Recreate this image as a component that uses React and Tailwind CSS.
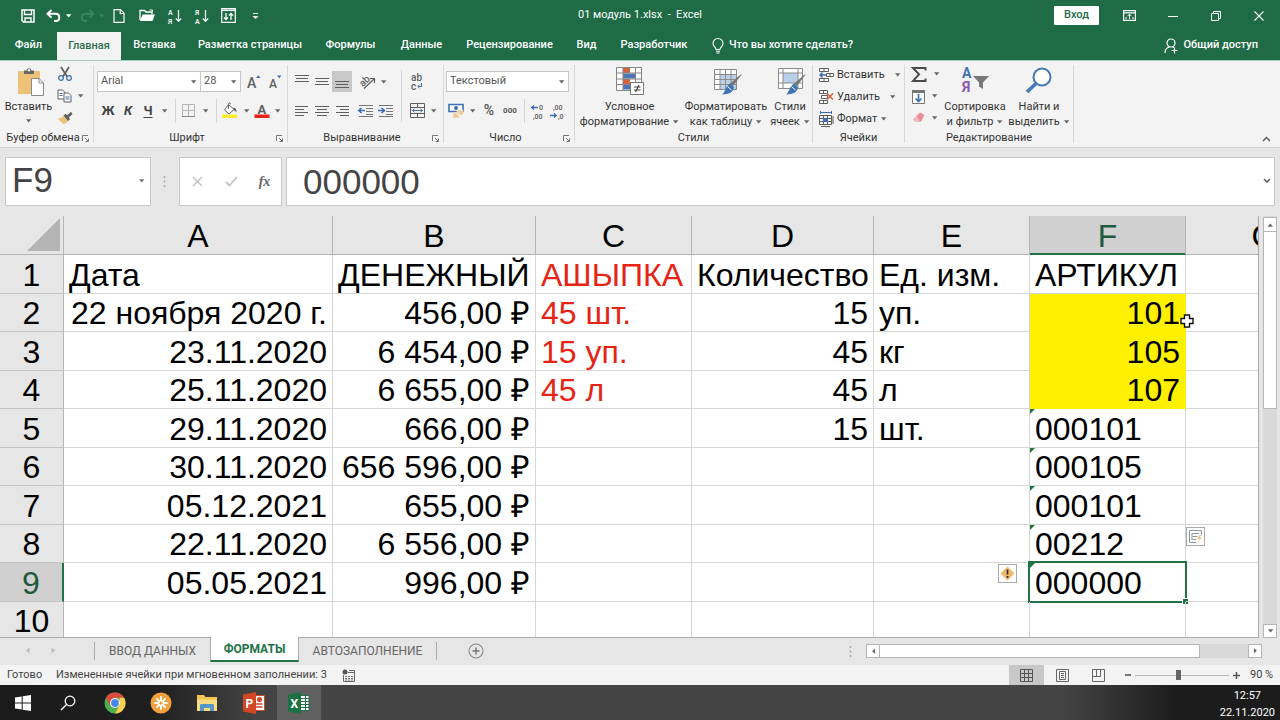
import React, { useState } from "react";

const INK = "#5f5f5f";
const BLUE = "#3f6fae";

const Arrow = ({ className = "" }) => (
  <svg width="7" height="4" viewBox="0 0 7 4" className={`shrink-0 ${className}`}>
    <path d="M1 0.3h5.400L3.700 3.400z" fill="currentColor" />
  </svg>
);

const Svg = ({ w = 16, h = 16, children, className = "" }) => (
  <svg
    width={w}
    height={h}
    viewBox={`0 0 ${w} ${h}`}
    fill="none"
    className={`shrink-0 overflow-visible ${className}`}
    fontFamily="Roboto, sans-serif"
  >
    {children}
  </svg>
);

const IconButton = ({ label, width = "w-5", className = "", children }) => (
  <button
    type="button"
    aria-label={label}
    className={`flex h-full shrink-0 items-center justify-center ${width} ${className}`}
  >
    {children}
  </button>
);

const Separator = () => <span className="h-6 w-px shrink-0 bg-[#d5d5d5]" />;

/* ---------- Title bar ---------- */

const SortIcon = ({ top, bottom }) => (
  <Svg>
    <text x="1" y="7" fontSize="7" fontWeight="700" fill="#e6f2ec">{top}</text>
    <text x="1" y="15.500" fontSize="7" fontWeight="700" fill="#e6f2ec">{bottom}</text>
    <path d="M11.500 2v11M8.800 10.500l2.700 2.800 2.700-2.800" stroke="#e6f2ec" strokeWidth="1.300" />
  </Svg>
);

const TitleBar = () => (
  <header className="grid h-[31px] grid-cols-[1fr_auto_1fr] items-center text-[11px] text-white">
    <div className="flex h-full items-center pl-[14px]">
      <IconButton label="Сохранить" width="w-[27px]">
        <Svg w={14} h={14}>
          <path d="M1 1h12v12H2.500L1 11.500z" stroke="#fff" strokeWidth="1.500" />
          <path d="M3.500 1v4.500h7V1M4 13V9h6v4" stroke="#fff" strokeWidth="1.400" />
        </Svg>
      </IconButton>
      <IconButton label="Отменить" width="w-[24px]">
        <Svg w={15} h={14}>
          <path d="M5.500 1L1.500 4.800l4 3.800M2 4.800h7.500c5 0 5 7.200 0 7.200H8" stroke="#fff" strokeWidth="2" />
        </Svg>
      </IconButton>
      <Arrow className="mr-[4px]" />
      <IconButton label="Вернуть" width="w-[22px]">
        <Svg w={15} h={14}>
          <path d="M9.500 1l4 3.800-4 3.800M13 4.800H5.500c-5 0-5 7.200 0 7.200H7" stroke="#3b8260" strokeWidth="2" />
        </Svg>
      </IconButton>
      <Arrow className="text-[#3b8260]" />
      <IconButton label="Создать" width="w-[28px]">
        <Svg w={12} h={14}>
          <path d="M1 .7h6.500L11 4.200v9.100H1zM7.200.7v3.800H11" stroke="#fff" strokeWidth="1.200" />
        </Svg>
      </IconButton>
      <IconButton label="Открыть" width="w-[28px]">
        <Svg w={17} h={13}>
          <path d="M1 11V1.500h4.500L7 3h6v2.500" stroke="#fff" strokeWidth="1.300" />
          <path d="M10.500 1h3v1.500" stroke="#fff" />
          <path d="M3.500 5.500H16L13.500 12H1z" fill="#fff" />
        </Svg>
      </IconButton>
      <IconButton label="Сортировка от А до Я" width="w-[27px]">
        <SortIcon top="А" bottom="Я" />
      </IconButton>
      <IconButton label="Сортировка от Я до А" width="w-[27px]">
        <SortIcon top="Я" bottom="А" />
      </IconButton>
      <IconButton label="Настраиваемая сортировка" width="w-[27px]">
        <Svg w={15} h={15}>
          <path d="M.7.7h13.600v13.600H.7z" stroke="#fff" strokeWidth="1.200" />
          <path d="M.7 2.300h13.600" stroke="#fff" strokeWidth="1.500" />
          <path d="M5 5v6.500M3 9.500l2 2 2-2M10 12V5.500M8 7.500l2-2 2 2" stroke="#fff" strokeWidth="1.300" />
        </Svg>
      </IconButton>
      <IconButton label="Настройка панели быстрого доступа" width="w-[27px]">
        <Svg w={7} h={8}>
          <path d="M1 1.500h5" stroke="#fff" />
          <path d="M.5 4h6l-3 3z" fill="#fff" />
        </Svg>
      </IconButton>
    </div>
    <h1 className="whitespace-pre">01 модуль 1.xlsx  -  Excel</h1>
    <div className="flex h-full items-center justify-end">
      <button
        type="button"
        className="mr-[8px] h-[19px] w-[45px] rounded-[1px] bg-white font-medium text-[#1e6b46]"
      >
        Вход
      </button>
      <IconButton label="Параметры отображения ленты" width="w-[44px]">
        <Svg w={13} h={11}>
          <path d="M.6.6h11.800v9.800H.6zM.6 2.800h11.800" stroke="#fff" strokeWidth="1.200" />
          <path d="M6.500 9V4.500M4.500 6.200l2-2 2 2M2 8h2M9 8h2" stroke="#fff" />
        </Svg>
      </IconButton>
      <IconButton label="Свернуть" width="w-[43px]">
        <Svg w={10} h={10}><path d="M0 5.500h10" stroke="#fff" /></Svg>
      </IconButton>
      <IconButton label="Свернуть в окно" width="w-[43px]">
        <Svg w={10} h={10}><path d="M.5 2.500h7v7h-7zM2.500 2.500v-2h7v7h-2" stroke="#fff" /></Svg>
      </IconButton>
      <IconButton label="Закрыть" width="w-[43px]">
        <Svg w={10} h={10}><path d="M.5.5l9 9M9.500.5l-9 9" stroke="#fff" strokeWidth="1.100" /></Svg>
      </IconButton>
    </div>
  </header>
);

/* ---------- Ribbon tabs ---------- */

const ribbonTabs = [
  { name: "Файл", width: "w-[57px]" },
  { name: "Главная", width: "w-[64px]", active: true },
  { name: "Вставка", width: "w-[67px]" },
  { name: "Разметка страницы", width: "w-[124px]" },
  { name: "Формулы", width: "w-[77px]" },
  { name: "Данные", width: "w-[65px]" },
  { name: "Рецензирование", width: "w-[111px]" },
  { name: "Вид", width: "w-[43px]" },
  { name: "Разработчик", width: "w-[92px]" },
];

const RibbonTabs = () => (
  <nav className="flex h-[29px] items-stretch text-[11px] font-medium text-white">
    {ribbonTabs.map((tab) => (
      <button
        key={tab.name}
        type="button"
        className={`shrink-0 whitespace-nowrap ${tab.width} ${
          tab.active ? "mt-px bg-[#f3f3f3] text-[#2c6b4b]" : ""
        }`}
      >
        {tab.name}
      </button>
    ))}
    <button type="button" className="ml-3 flex items-center gap-[5px] whitespace-nowrap">
      <Svg w={12} h={16}>
        <path
          d="M4 11.500C4 9 1 8.500 1 5.500a5 5 0 0 1 10 0C11 8.500 8 9 8 11.500zM4 13.200h4M4.500 15h3"
          stroke="#fff"
          strokeWidth="1.100"
        />
      </Svg>
      Что вы хотите сделать?
    </button>
    <button type="button" className="mr-[22px] ml-auto flex items-center gap-1 whitespace-nowrap">
      <Svg w={15} h={16}>
        <circle cx="7" cy="5" r="4" stroke="#fff" strokeWidth="1.200" />
        <path d="M1 15c0-3.500 2-5.500 4.500-6M8.500 8.800l1.500.8M10.500 9.500v6M7.500 12.500h6" stroke="#fff" strokeWidth="1.200" />
      </Svg>
      Общий доступ
    </button>
  </nav>
);

/* ---------- Ribbon ---------- */

const Launcher = ({ label }) => (
  <button type="button" aria-label={label} className="ml-auto">
    <Svg w={7} h={7}>
      <path d="M.5 6V.5H6M3 3l3 3M6.500 3.500v3h-3" stroke="#777" />
    </Svg>
  </button>
);

const Group = ({ title, width, launcher, children }) => (
  <section className={`flex shrink-0 flex-col ${width}`}>
    <div className="flex h-[70px] min-w-0 flex-1">{children}</div>
    <div className="flex h-[18px] items-center pr-1 pl-1">
      <h2 className="flex-1 text-center whitespace-nowrap">{title}</h2>
      {launcher && <Launcher label={title} />}
    </div>
  </section>
);

const GroupLine = () => <div className="my-[4px] w-px shrink-0 bg-[#d8d8d8]" />;

const BigButton = ({ icon, lines, width, arrowBelow }) => (
  <button type="button" className={`flex shrink-0 flex-col items-center pt-[6px] leading-[15px] ${width}`}>
    <span className="flex h-[32px] items-start justify-center">{icon}</span>
    {lines.map((line, idx) => (
      <span key={line} className="flex items-center gap-[3px] whitespace-nowrap">
        {line}
        {!arrowBelow && idx === lines.length - 1 && <Arrow className="text-[#666]" />}
      </span>
    ))}
    {arrowBelow && <Arrow className="mt-[5px] text-[#666]" />}
  </button>
);

const Select = ({ label, value, width }) => (
  <div className={`relative h-[21px] shrink-0 ${width}`}>
    <select
      aria-label={label}
      className="h-full w-full appearance-none border border-[#c6c6c6] bg-white pl-[3px] text-[11px] text-[#555]"
    >
      <option>{value}</option>
    </select>
    <Arrow className="pointer-events-none absolute top-[9px] right-[4px] text-[#666]" />
  </div>
);

const Lines = ({ rows, y = 2 }) => (
  <Svg w={14} h={14}>
    {rows.map(([x, w], idx) => (
      <path key={idx} d={`M${x} ${y + idx * 3 + 0.5}h${w}`} stroke={INK} />
    ))}
  </Svg>
);

const Clipboard = () => (
  <Group title="Буфер обмена" width="w-[93px]" launcher>
    <BigButton
      width="w-[57px]"
      lines={["Вставить"]}
      arrowBelow
      icon={
        <Svg w={28} h={30} className="ml-1">
          <path d="M1 4h22v23H1z" fill="#ebc277" />
          <path d="M7 7V3.500h2.500C10 .5 14 .5 14.500 3.500H17V7z" fill="#666" />
          <circle cx="12" cy="3.300" r="1.200" fill="#f3f3f3" />
          <path d="M14.500 11.500h7.500l4.500 4.500v12.500h-12z" fill="#fff" stroke="#8a8a8a" />
          <path d="M22 11.500v4.500h4.500" stroke="#8a8a8a" />
        </Svg>
      }
    />
    <div className="flex flex-col pt-[2px]">
      <button type="button" aria-label="Вырезать" className="flex h-[22px] items-center">
        <Svg w={16} h={16}>
          <path d="M4 1l6 9.500M12 1L6 10.500" stroke={INK} strokeWidth="1.700" />
          <circle cx="4" cy="12" r="2.300" stroke={BLUE} strokeWidth="1.300" />
          <circle cx="12" cy="12" r="2.300" stroke={BLUE} strokeWidth="1.300" />
        </Svg>
      </button>
      <button type="button" aria-label="Копировать" className="flex h-[22px] items-center gap-[4px]">
        <Svg w={16} h={14}>
          <path d="M1 1h4.500L8 3.500V10H1z" fill="#fff" stroke={INK} />
          <path d="M2.500 4.500h3M2.500 6.500h3" stroke={BLUE} />
          <path d="M7 4h4.500L14 6.500V13H7z" fill="#fff" stroke={INK} />
          <path d="M8.500 8h4M8.500 10h4" stroke={BLUE} />
        </Svg>
        <Arrow className="text-[#666]" />
      </button>
      <button type="button" aria-label="Формат по образцу" className="flex h-[22px] items-center">
        <Svg w={17} h={14}>
          <path d="M1 8l6-3 4 5-4 3.500z" fill="#ebc277" />
          <path d="M6.500 4.500l4.500 5.500 2-1.500-1.200-2L15.500 3 14 .8l-3.800 3.400-1.500-1.500z" fill={INK} />
        </Svg>
      </button>
    </div>
  </Group>
);

const FontGroup = () => (
  <Group title="Шрифт" width="w-[193px]" launcher>
    <div className="flex flex-col pt-[6px] pl-[3px]">
      <div className="flex h-[29px] items-center">
        <Select label="Шрифт" value="Arial" width="w-[104px]" />
        <Select label="Размер шрифта" value="28" width="w-[41px] -ml-px" />
        <IconButton label="Увеличить размер шрифта" width="w-[21px]" className="ml-[2px]">
          <Svg w={14} h={16}>
            <text x="0" y="13.500" fontSize="14" fontWeight="500" fill={INK}>А</text>
            <path d="M9 4l2.300-2.800L13.500 4z" fill={BLUE} />
          </Svg>
        </IconButton>
        <IconButton label="Уменьшить размер шрифта" width="w-[21px]">
          <Svg w={14} h={16}>
            <text x="1" y="13.500" fontSize="12" fontWeight="500" fill={INK}>А</text>
            <path d="M9 1.500h4.500L11.300 4.300z" fill={BLUE} />
          </Svg>
        </IconButton>
      </div>
      <div className="flex h-[29px] items-center text-[13px] text-[#444]">
        <IconButton label="Полужирный" className="ml-[1px] font-bold">Ж</IconButton>
        <IconButton label="Курсив" className="font-bold italic">К</IconButton>
        <IconButton label="Подчеркнутый" className="font-bold underline underline-offset-2">Ч</IconButton>
        <Arrow className="mr-[7px] ml-[3px] text-[#666]" />
        <Separator />
        <IconButton label="Границы" width="w-[24px]">
          <Svg w={13} h={13}>
            <path d="M.5.5h12v12H.5zM6.500.5v12M.5 6.500h12" stroke="#b5b5b5" />
            <path d="M0 12.500h13" stroke="#888" />
          </Svg>
        </IconButton>
        <Arrow className="mr-[7px] ml-[2px] text-[#666]" />
        <Separator />
        <IconButton label="Цвет заливки" width="w-[26px]">
          <Svg w={16} h={17}>
            <path d="M6.500 2.500l5.500 5-5 4.500L2.500 8z" fill="#fff" stroke={INK} />
            <path d="M6.500 7V2.200c0-1.800 2-1.800 2 0" stroke={INK} />
            <path d="M11.500 5.500c2.500.5 3 2 3 5-1-1.500-1.500-2-2.800-2.500z" fill={INK} />
            <path d="M0 12.500h15v3.500H0z" fill="#fdea2e" />
          </Svg>
        </IconButton>
        <Arrow className="text-[#666]" />
        <IconButton label="Цвет текста" width="w-[24px]">
          <Svg w={16} h={17}>
            <text x="3.500" y="11.500" fontSize="13" fontWeight="700" fill={INK}>А</text>
            <path d="M.5 12.500h15v3.500H.5z" fill="#e5241a" />
          </Svg>
        </IconButton>
        <Arrow className="text-[#666]" />
      </div>
    </div>
  </Group>
);

const IndentIcon = ({ right }) => (
  <Svg w={16} h={14}>
    <path d="M1 1.500h14M8 4.500h7M8 7.500h7M8 10.500h7M1 12.500h14" stroke="#777" />
    <path
      d={right ? "M0 6.500h6M3.500 4l3 2.500-3 2.500" : "M7 6.500H1M3.500 4L.8 6.500 3.500 9"}
      stroke={BLUE}
      strokeWidth="1.600"
    />
  </Svg>
);

const Alignment = () => (
  <Group title="Выравнивание" width="w-[155px]" launcher>
    <div className="flex flex-col pt-[6px] pl-[4px]">
      <div className="flex h-[29px] items-center">
        <IconButton label="По верхнему краю"><Lines y={0} rows={[[0, 14], [1, 12], [0, 14]]} /></IconButton>
        <IconButton label="По середине"><Lines y={3} rows={[[0, 14], [1, 12], [0, 14]]} /></IconButton>
        <span className="h-[21px]">
          <IconButton label="По нижнему краю" className="bg-[#c8c8c8]">
            <Lines y={6} rows={[[0, 14], [1, 12], [0, 14]]} />
          </IconButton>
        </span>
        <IconButton label="Ориентация" width="w-[24px]" className="ml-[4px]">
          <Svg w={16} h={16}>
            <text x="-1" y="10" fontSize="10" fontWeight="500" fill={INK} transform="rotate(-45 5 7)">ab</text>
            <path d="M4 14.500L14 5M14.500 9V4.500H10" stroke={INK} strokeWidth="1.200" />
          </Svg>
        </IconButton>
        <Arrow className="text-[#666]" />
      </div>
      <div className="flex h-[29px] items-center">
        <IconButton label="По левому краю"><Lines rows={[[0, 13], [0, 9], [0, 13], [0, 9]]} /></IconButton>
        <IconButton label="По центру"><Lines rows={[[0, 14], [2, 10], [0, 14], [2, 10]]} /></IconButton>
        <IconButton label="По правому краю"><Lines rows={[[1, 13], [5, 9], [1, 13], [5, 9]]} /></IconButton>
        <IconButton label="Уменьшить отступ" className="ml-[4px]"><IndentIcon /></IconButton>
        <IconButton label="Увеличить отступ"><IndentIcon right /></IconButton>
      </div>
    </div>
    <span className="mt-[9px] ml-[5px] h-[52px] w-px bg-[#d8d8d8]" />
    <div className="flex flex-col pt-[6px] pl-[5px]">
      <IconButton label="Перенести текст" className="max-h-[29px]">
        <Svg w={14} h={16}>
          <text x="1" y="7" fontSize="10" fontWeight="500" fill={INK}>ab</text>
          <text x="1" y="15.500" fontSize="10" fontWeight="500" fill={INK}>c</text>
          <path d="M11.500 9v3.500H8M9.500 10.800L7.800 12.500l1.700 1.700" stroke={BLUE} />
        </Svg>
      </IconButton>
      <div className="flex h-[29px] items-center">
        <IconButton label="Объединить и поместить в центре">
          <Svg w={15} h={15}>
            <path d="M.5.5h14v14H.5zM.5 4.500h14M.5 10.500h14M7.500.5v4M7.500 10.500v4" stroke={INK} />
            <path d="M2.500 7.500h10M4.500 5.800L2.500 7.500l2 1.700M10.500 5.800l2 1.700-2 1.700" stroke={BLUE} />
          </Svg>
        </IconButton>
        <Arrow className="ml-[3px] text-[#666]" />
      </div>
    </div>
  </Group>
);

const DecimalIcon = ({ less }) => (
  <Svg w={16} h={16}>
    <text x={less ? 3 : 9} y="7" fontSize="7" fontWeight="500" fill={INK}>{less ? ",00" : "0"}</text>
    <text x={less ? 8 : 3} y="15.500" fontSize="7" fontWeight="500" fill={INK}>{less ? ",0" : ",00"}</text>
    <path
      d={less ? "M0 12.500h6M4 10.500l2.200 2L4 14.500" : "M8 4.500H1.500M4 2.500l-2.300 2L4 6.500"}
      stroke={BLUE}
      strokeWidth="1.300"
    />
  </Svg>
);

const NumberGroup = () => (
  <Group title="Число" width="w-[130px]" launcher>
    <div className="flex flex-col pt-[6px] pl-[2px]">
      <div className="flex h-[29px] items-center">
        <Select label="Числовой формат" value="Текстовый" width="w-[123px]" />
      </div>
      <div className="flex h-[29px] items-center text-[#555]">
        <IconButton label="Финансовый числовой формат" width="w-[21px]">
          <Svg w={17} h={16}>
            <path d="M1 1.500h14v7H1z" fill="#fff" stroke={BLUE} strokeWidth="1.600" />
            <circle cx="8" cy="5" r="2" fill={BLUE} />
            <path d="M9 7h6v5H9zM5 10h6v5H5z" fill="#edcb8e" stroke="#f3f3f3" strokeWidth=".6" />
          </Svg>
        </IconButton>
        <Arrow className="ml-[2px] text-[#666]" />
        <IconButton label="Процентный формат" className="ml-[3px] text-[14px] font-medium">%</IconButton>
        <IconButton label="Формат с разделителями" width="w-[22px]" className="text-[8px] font-bold">000</IconButton>
        <span className="w-[3px]" />
        <Separator />
        <IconButton label="Увеличить разрядность" className="ml-[3px]"><DecimalIcon /></IconButton>
        <IconButton label="Уменьшить разрядность"><DecimalIcon less /></IconButton>
      </div>
    </div>
  </Group>
);

const BrushShape = () => (
  <g>
    <path d="M28 7l-9 12-3-2.500L26 8z" fill="#777" />
    <path d="M16 16.500l4 3.500c-1 6-5 7-12 7.500 3.500-2 3-8 8-11z" fill="#3f74b5" />
    <path d="M13.500 19.500l4 3.500" stroke="#fff" />
  </g>
);

const Styles = () => (
  <Group title="Стили" width="w-[237px]">
    <BigButton
      width="w-[109px]"
      lines={["Условное", "форматирование"]}
      icon={
        <Svg w={28} h={28}>
          <path d="M.5.5h25v23H.5z" fill="#fff" />
          <path d="M7 1h7v5H7zM7 12h7v5H7z" fill="#d0643c" />
          <path d="M7 6.500h12v5H7zM7 17.500h9v5H7z" fill="#4a76b3" />
          <path d="M.5.5h25v23H.5zM.5 6h25M.5 12h25M.5 17.500h25M7 .5v23M19.500.5v23" stroke="#858585" />
          <path d="M14.500 15.500h13v12h-13z" fill="#fff" stroke="#777" />
          <path d="M18 20h6.500M18 23h6.500M23 18l-3.500 7" stroke="#444" strokeWidth="1.200" />
        </Svg>
      }
    />
    <BigButton
      width="w-[84px]"
      lines={["Форматировать", "как таблицу"]}
      icon={
        <Svg w={29} h={28} className="ml-1">
          <path d="M.5 2.500h22v20H.5z" fill="#fff" />
          <path d="M6 8h16v14H6z" fill="#bcd2ea" />
          <path d="M.5 2.500h22v20H.5zM.5 7.500h22M.5 12.500h22M.5 17.500h22M6 2.500v20M11.500 2.500v20M17 2.500v20" stroke="#8a8a8a" />
          <BrushShape />
        </Svg>
      }
    />
    <BigButton
      width="w-[44px]"
      lines={["Стили", "ячеек"]}
      icon={
        <Svg w={29} h={28} className="ml-1">
          <path d="M.5 1.500h24v20H.5z" fill="#fff" />
          <path d="M5 6h15v10H5z" fill="#b7cfe9" />
          <path d="M.5 1.500h24v20H.5zM.5 6h24M.5 16h24M5 1.500v20M20 1.500v20" stroke="#8a8a8a" />
          <BrushShape />
        </Svg>
      }
    />
  </Group>
);

const SmallRow = ({ icon, text, gap = "ml-[3px]" }) => (
  <button type="button" className="flex h-[22px] items-center whitespace-nowrap">
    {icon}
    <span className="ml-[3px]">{text}</span>
    <Arrow className={`${gap} text-[#666]`} />
  </button>
);

const Cells = () => (
  <Group title="Ячейки" width="w-[91px]">
    <div className="flex flex-col pt-[3px] pl-[5px]">
      <SmallRow
        text="Вставить"
        gap="ml-[9px]"
        icon={
          <Svg w={16} h={16}>
            <path d="M1.500 1.500h9v3h-9zM6 1.500v3M1.500 11.500h9v3h-9zM6 11.500v3M8.500 6.500h7v3h-7zM12 6.500v3" fill="#fff" stroke={INK} />
            <path d="M8 8H2M4.500 5.500L2 8l2.500 2.500" stroke={BLUE} strokeWidth="1.500" />
          </Svg>
        }
      />
      <SmallRow
        text="Удалить"
        gap="ml-[9px]"
        icon={
          <Svg w={16} h={16}>
            <path d="M1.500 1.500h8v3h-8zM5.500 1.500v3M1.500 11.500h8v3h-8zM5.500 11.500v3M3.500 6.500h6v3h-6z" fill="#fff" stroke={INK} />
            <path d="M9 4.500l6 6M15 4.500l-6 6" stroke="#d0643c" strokeWidth="1.600" />
          </Svg>
        }
      />
      <SmallRow
        text="Формат"
        icon={
          <Svg w={16} h={16}>
            <path d="M2.500 0v3M13.500 0v3M3 1.500h10" stroke={BLUE} />
            <path d="M1.500 4.500h12v9h-12zM1.500 7.500h12M1.500 10.500h12M5.500 4.500v9M9.500 4.500v9M3 15.500h9M15 5v8" stroke={INK} />
            <path d="M5 7h5v4H5z" fill={BLUE} />
          </Svg>
        }
      />
    </div>
  </Group>
);

const Editing = () => (
  <Group title="Редактирование" width="w-[168px]">
    <div className="flex w-[36px] flex-col pt-[2px] pl-[6px]">
      <button type="button" aria-label="Автосумма" className="flex h-[22px] items-center gap-[6px]">
        <Svg w={16} h={15}>
          <path d="M14.500 3.500V1H2l6 6.300L2 14h12.500v-2.500" stroke="#4a4a4a" strokeWidth="2" />
        </Svg>
        <Arrow className="text-[#666]" />
      </button>
      <button type="button" aria-label="Заполнить" className="flex h-[22px] items-center gap-[5px]">
        <Svg w={15} h={15}>
          <path d="M1.500 1.500h12v13h-12z" fill="#fff" stroke="#777" />
          <path d="M1 1h13v3H1z" fill="#777" />
          <path d="M7.500 5v7.500M4.500 9.500l3 3 3-3" stroke={BLUE} strokeWidth="1.700" />
        </Svg>
        <Arrow className="text-[#666]" />
      </button>
      <button type="button" aria-label="Очистить" className="flex h-[22px] items-center gap-[5px]">
        <Svg w={15} h={15}>
          <path d="M9 1.500L13.500 4l-4 7H5L2 8.500z" fill="#e98f9c" />
          <path d="M2 8.500l3.500-3.500L9.500 11H5z" fill="#f2b7bf" />
        </Svg>
        <Arrow className="text-[#666]" />
      </button>
    </div>
    <BigButton
      width="w-[68px]"
      lines={["Сортировка", "и фильтр"]}
      icon={
        <Svg w={28} h={30}>
          <text x="1" y="11" fontSize="14" fontWeight="700" fill="#3f74b5">А</text>
          <text x="1" y="25" fontSize="14" fontWeight="700" fill="#8a5aa8">Я</text>
          <path d="M12 9h16l-6 6.500V22l-4-2.500v-4z" fill="#777" />
        </Svg>
      }
    />
    <BigButton
      width="w-[60px]"
      lines={["Найти и", "выделить"]}
      icon={
        <Svg w={28} h={28}>
          <circle cx="17" cy="10" r="8.500" fill="#fff" stroke="#4379b8" strokeWidth="2" />
          <path d="M11 16.500L2 25" stroke="#4379b8" strokeWidth="3.500" />
        </Svg>
      }
    />
  </Group>
);

const Ribbon = () => (
  <div className="flex h-[88px] border-t border-b border-t-[#a9cdbb] border-b-[#cfcfcf] bg-[#f3f3f3] text-[11px] text-[#333]">
    <Clipboard />
    <GroupLine />
    <FontGroup />
    <GroupLine />
    <Alignment />
    <GroupLine />
    <NumberGroup />
    <GroupLine />
    <Styles />
    <GroupLine />
    <Cells />
    <GroupLine />
    <Editing />
    <GroupLine />
    <button type="button" aria-label="Свернуть ленту" className="mr-[9px] mb-[5px] ml-auto self-end">
      <Svg w={9} h={6}><path d="M1 5l3.500-3.500L8 5" stroke="#555" strokeWidth="1.400" /></Svg>
    </button>
  </div>
);

/* ---------- Formula bar ---------- */

const FormulaBar = ({ value, onChange }) => (
  <div className="flex h-[68px] items-start bg-[#e6e6e6] pt-[9px] pr-[5px] pl-[5px] font-['Liberation_Sans',Arial,sans-serif] text-[35px] leading-[47px] text-[#444]">
    <div className="relative h-[49px] w-[146px] shrink-0">
      <input
        aria-label="Имя"
        defaultValue="F9"
        className="block h-full w-full border border-[#c9c9c9] bg-white pb-[3px] pl-[6px]"
      />
      <Arrow className="absolute top-[22px] right-[6px] text-[#777]" />
    </div>
    <span className="ml-[12px] flex h-[49px] items-center">
      <Svg w={3} h={12}><path d="M1.500 0v12" stroke="#a8a8a8" strokeWidth="1.500" strokeDasharray="2 2.500" /></Svg>
    </span>
    <div className="ml-[13px] flex h-[49px] w-[103px] shrink-0 items-center border border-[#c9c9c9] bg-white">
      <IconButton label="Отмена" width="w-[34px]">
        <Svg w={11} h={11}><path d="M1 1l9 9M10 1l-9 9" stroke="#c4c4c4" strokeWidth="1.600" /></Svg>
      </IconButton>
      <IconButton label="Ввод" width="w-[34px]">
        <Svg w={13} h={11}><path d="M1 6l3.500 3.500L12 1" stroke="#c4c4c4" strokeWidth="1.800" /></Svg>
      </IconButton>
      <IconButton
        label="Вставить функцию"
        width="w-[33px]"
        className="font-['Liberation_Serif',serif] text-[14px] font-bold text-[#666] italic"
      >
        fx
      </IconButton>
    </div>
    <div className="relative ml-[4px] h-[49px] min-w-0 flex-1">
      <input
        aria-label="Строка формул"
        value={value}
        onChange={(e) => onChange(e.target.value)}
        className="block h-full w-full border border-[#c9c9c9] bg-white pl-[16px]"
      />
      <Svg w={8} h={6} className="absolute top-[21px] right-[4px]">
        <path d="M1 1l3 3 3-3" stroke="#666" strokeWidth="1.600" />
      </Svg>
    </div>
  </div>
);

/* ---------- Sheet ---------- */

const columns = [
  { name: "A", width: "w-[269px]" },
  { name: "B", width: "w-[203px]" },
  { name: "C", width: "w-[156px]" },
  { name: "D", width: "w-[182px]" },
  { name: "E", width: "w-[156px]" },
  { name: "F", width: "w-[156px]" },
];

const rows = [
  ["Дата", "ДЕНЕЖНЫЙ", "АШЫПКА", "Количество", "Ед. изм.", "АРТИКУЛ"],
  ["22 ноября 2020 г.", "456,00 ₽", "45 шт.", "15", "уп.", "101"],
  ["23.11.2020", "6 454,00 ₽", "15 уп.", "45", "кг", "105"],
  ["25.11.2020", "6 655,00 ₽", "45 л", "45", "л", "107"],
  ["29.11.2020", "666,00 ₽", "", "15", "шт.", "000101"],
  ["30.11.2020", "656 596,00 ₽", "", "", "", "000105"],
  ["05.12.2021", "655,00 ₽", "", "", "", "000101"],
  ["22.11.2020", "6 556,00 ₽", "", "", "", "00212"],
  ["05.05.2021", "996,00 ₽", "", "", "", "000000"],
  ["", "", "", "", "", ""],
];

const Sheet = ({ active }) => (
  <div className="flex min-h-0 flex-1 bg-[#e6e6e6]">
    <div className="min-w-0 flex-1 overflow-hidden border-r border-b border-[#ababab]">
      <table className="w-full table-fixed border-separate border-spacing-0 font-['Liberation_Sans',Arial,sans-serif] text-[32px] leading-[35px] text-black">
        <thead>
          <tr className="h-[39px]">
            <th className="w-[64px] border-r border-b border-[#b5b5b5] p-0">
              <Svg w={34} h={34} className="ml-[27px]"><path d="M33 0v33H0z" fill="#b4b4b4" /></Svg>
            </th>
            {columns.map((col) => (
              <th
                key={col.name}
                className={`border-r border-b p-0 pt-[2px] font-normal ${col.width} ${
                  col.name === "F"
                    ? "border-r-[#b5b5b5] border-b-[#217346] bg-[#d0d0d0] text-[#1f5a3e] shadow-[inset_0_-1px_#217346]"
                    : "border-[#b5b5b5]"
                }`}
              >
                {col.name}
              </th>
            ))}
            <th className="overflow-hidden border-b border-[#b5b5b5] p-0 pt-[2px] font-normal">
              <div className="w-[156px] text-center">G</div>
            </th>
          </tr>
        </thead>
        <tbody className="bg-white">
          {rows.map((row, r) => (
            <tr key={r} className="odd:h-[39px] even:h-[38px]">
              <th
                className={`border-r border-b border-[#c4c4c4] p-0 pt-[2px] font-normal ${
                  r === 8
                    ? "border-r-2 border-r-[#217346] bg-[#d0d0d0] text-[#1f5a3e]"
                    : "border-r-[#b5b5b5] bg-[#e6e6e6]"
                }`}
              >
                {r + 1}
              </th>
              {row.map((text, c) => {
                const isNumber = r > 0 && (c < 2 || c === 3 || (c === 5 && r < 4));
                const isYellow = c === 5 && r > 0 && r < 4;
                const isSelected = c === 5 && r === 8;
                return (
                  <td
                    key={c}
                    className={`relative border-r border-b px-[5px] pt-[2px] pb-0 whitespace-nowrap ${
                      isNumber ? "text-right" : "text-left"
                    } ${c === 2 ? "text-[#e62415]" : ""} ${
                      isYellow ? "border-[#fff000] bg-[#fff000]" : "border-[#d6d6d6]"
                    }`}
                  >
                    {c === 5 && r > 3 && r < 9 && (
                      <span className="absolute top-0 left-0 border-t-[5px] border-r-[5px] border-t-[#217346] border-r-transparent" />
                    )}
                    {isSelected && (
                      <span className="absolute -top-[2px] -right-[2px] -bottom-[2px] -left-[2px] border-2 border-[#217346]">
                        <span className="absolute -right-[3px] -bottom-[3px] h-[6px] w-[6px] border-t border-l border-white bg-[#217346]" />
                      </span>
                    )}
                    {isSelected ? active : text}
                    {c === 4 && r === 8 && (
                      <button
                        type="button"
                        aria-label="Ошибка в ячейке"
                        className="absolute top-[1px] right-[12px] flex h-[19px] w-[19px] items-center justify-center border border-[#ababab] bg-white"
                      >
                        <Svg w={15} h={15}>
                          <path d="M7.500.5l7 7-7 7-7-7z" fill="#eebb6c" />
                          <path d="M7.500 3.500v5M7.500 10v2" stroke="#333" strokeWidth="1.800" />
                        </Svg>
                      </button>
                    )}
                  </td>
                );
              })}
              <td className="relative border-b border-[#d6d6d6] p-0">
                {r === 1 && (
                  <Svg w={14} h={14} className="absolute top-[20px] -left-[6px] z-10">
                    <path
                      d="M4.500 1h5v3.500H13v5H9.500V13h-5V9.500H1v-5h3.500z"
                      fill="#fff"
                      stroke="#111"
                      strokeWidth="1.400"
                    />
                  </Svg>
                )}
                {r === 7 && (
                  <button
                    type="button"
                    aria-label="Параметры мгновенного заполнения"
                    className="absolute top-[2px] left-0 flex h-[19px] w-[19px] items-center justify-center border border-[#ababab] bg-white"
                  >
                    <Svg w={15} h={15}>
                      <path d="M13.500 6V1.500h-12v12h7M4 4.500h7M4.500 7.500h5M4.500 10.500h4M4 4v7.500" stroke="#8f9aa0" />
                      <path d="M12 6l-3 4h2.500L9 14l5-5.500h-2.500L13.500 6z" fill="#e9c27a" />
                    </Svg>
                  </button>
                )}
              </td>
            </tr>
          ))}
        </tbody>
      </table>
    </div>
    <div className="mr-[3px] ml-[4px] flex w-[14px] shrink-0 flex-col bg-[#d9d9d9] pt-px">
      <button
        type="button"
        aria-label="Вверх"
        className="flex h-[15px] items-center justify-center border border-[#b5b5b5] bg-white"
      >
        <Arrow className="rotate-180 text-[#666]" />
      </button>
      <div className="h-[177px] border border-t-0 border-[#b5b5b5] bg-white" />
      <button
        type="button"
        aria-label="Вниз"
        className="mt-auto flex h-[14px] items-center justify-center border border-[#b5b5b5] bg-white"
      >
        <Arrow className="text-[#666]" />
      </button>
    </div>
  </div>
);

/* ---------- Sheet tabs ---------- */

const SheetTabs = () => (
  <div className="flex h-[27px] items-start bg-[#e6e6e6] text-[12px] text-[#666]">
    <div className="flex h-[24px] w-[94px] shrink-0 items-center gap-[21px] pl-[25px]">
      <Svg w={5} h={7}><path d="M4.500.5v6L1 3.500z" fill="#bdbdbd" /></Svg>
      <Svg w={5} h={7}><path d="M.5.5v6L4 3.500z" fill="#bdbdbd" /></Svg>
    </div>
    <span className="mt-[4px] h-[18px] w-px bg-[#ababab]" />
    <button type="button" className="h-[25px] w-[115px] shrink-0">ВВОД ДАННЫХ</button>
    <button
      type="button"
      className="-mt-px h-[25px] w-[89px] shrink-0 border-r border-b-2 border-l border-r-[#ababab] border-b-[#217346] border-l-[#ababab] bg-white pt-px font-bold text-[#217346]"
    >
      ФОРМАТЫ
    </button>
    <button type="button" className="h-[25px] w-[137px] shrink-0">АВТОЗАПОЛНЕНИЕ</button>
    <span className="mt-[4px] h-[18px] w-px bg-[#ababab]" />
    <button type="button" aria-label="Новый лист" className="mt-[5px] ml-[31px]">
      <Svg w={16} h={16}>
        <circle cx="8" cy="8" r="7" stroke="#888" strokeWidth="1.100" />
        <path d="M8 4.500v7M4.500 8h7" stroke="#777" strokeWidth="1.500" />
      </Svg>
    </button>
    <div className="mt-[6px] ml-auto flex h-[14px] items-stretch">
      <span className="mr-[14px] flex items-center">
        <Svg w={3} h={11}><path d="M1.500 0v11" stroke="#a8a8a8" strokeWidth="1.500" strokeDasharray="2 2.500" /></Svg>
      </span>
      <button type="button" aria-label="Влево" className="flex w-[14px] items-center justify-center border border-[#b5b5b5] bg-white">
        <Arrow className="rotate-90 text-[#666]" />
      </button>
      <div className="w-[320px] border border-l-0 border-[#b5b5b5] bg-white" />
      <div className="w-[48px] bg-[#d9d9d9]" />
      <button type="button" aria-label="Вправо" className="mr-[18px] flex w-[14px] items-center justify-center border border-[#b5b5b5] bg-white">
        <Arrow className="-rotate-90 text-[#666]" />
      </button>
    </div>
  </div>
);

/* ---------- Status bar ---------- */

const StatusBar = () => (
  <footer className="flex h-[20px] items-center bg-[#f3f3f3] text-[11px] text-[#444]">
    <span className="w-[56px] shrink-0 pl-[7px]">Готово</span>
    <span className="w-[286px] shrink-0 whitespace-nowrap">Измененные ячейки при мгновенном заполнении: 3</span>
    <Svg w={13} h={13}>
      <circle cx="3" cy="3" r="2.500" fill="#555" />
      <path d="M1.500 6v6.500h11V1.500H7M6 3.500h6.500" stroke="#666" />
      <path d="M3 7.500h8M3 9.500h8M3 11h8" stroke="#777" strokeDasharray="2 1" />
    </Svg>
    <div className="ml-auto flex h-full items-center">
      <IconButton label="Обычный" width="w-[35px]" className="bg-[#c8c8c8]">
        <Svg w={13} h={13}><path d="M.5.5h12v12H.5zM.5 4.500h12M.5 8.500h12M4.500.5v12M8.500.5v12" stroke="#555" /></Svg>
      </IconButton>
      <IconButton label="Разметка страницы" width="w-[37px]">
        <Svg w={13} h={13}>
          <path d="M.5.5h12v12H.5zM3.500 2.500h6v8h-6zM5 4.500h3M5 6.500h3M5 8.500h3" stroke="#666" />
        </Svg>
      </IconButton>
      <IconButton label="Страничный режим" width="w-[34px]">
        <Svg w={13} h={13}><path d="M.5.5h12v12H.5zM4.500 0v7.500M8.500 0v7.500M.5 7.500h8" stroke="#666" /></Svg>
      </IconButton>
      <IconButton label="Уменьшить" width="w-[14px]" className="ml-[6px]">
        <Svg w={6} h={2}><path d="M0 1h6" stroke="#555" strokeWidth="1.600" /></Svg>
      </IconButton>
      <input
        type="range"
        aria-label="Масштаб"
        min="10"
        max="200"
        defaultValue="98"
        className="h-[10px] w-[94px] appearance-none bg-[linear-gradient(#b5b5b5,#b5b5b5)] bg-[length:100%_1px] bg-center bg-no-repeat [&::-webkit-slider-thumb]:h-[10px] [&::-webkit-slider-thumb]:w-[5px] [&::-webkit-slider-thumb]:appearance-none [&::-webkit-slider-thumb]:bg-[#666]"
      />
      <IconButton label="Увеличить" width="w-[14px]">
        <Svg w={7} h={7}><path d="M0 3.500h7M3.500 0v7" stroke="#555" strokeWidth="1.500" /></Svg>
      </IconButton>
      <span className="w-[37px] pl-[7px] whitespace-nowrap">90 %</span>
    </div>
  </footer>
);

/* ---------- Taskbar ---------- */

const Taskbar = () => (
  <div className="flex h-[35px] shrink-0 items-stretch bg-[linear-gradient(90deg,#1b1b1b_0,#1f1f1f_12%,#444444_20%,#444444_83%,#1c1c1c_92%)] text-[11px] text-white">
    <IconButton label="Пуск" width="w-[45px]">
      <Svg w={16} h={16}>
        <path d="M0 2.500l6.700-1v6H0zM7.700 1.300L16 0v7.500H7.700zM0 8.500h6.700v6L0 13.500zM7.700 8.500H16V16l-8.300-1.300z" fill="#fff" />
      </Svg>
    </IconButton>
    <IconButton label="Поиск" width="w-[46px]">
      <Svg w={16} h={16}>
        <circle cx="10" cy="6" r="4.800" stroke="#fff" strokeWidth="1.300" />
        <path d="M6.500 9.500L1 15" stroke="#fff" strokeWidth="1.500" />
      </Svg>
    </IconButton>
    <IconButton label="Google Chrome" width="w-[48px]">
      <Svg w={22} h={22}>
        <circle cx="11" cy="11" r="10.500" fill="#4caf50" />
        <path d="M11 11L1.900 5.700A10.500 10.500 0 0 1 20.100 5.750H11z" fill="#dd4b3e" />
        <path d="M20.100 5.750A10.500 10.500 0 0 1 11 21.500l4.600-7.900V5.750z" fill="#fcd04b" />
        <path d="M1.900 5.700L6.500 13.600 11 11V5.750z" fill="#dd4b3e" />
        <circle cx="11" cy="11" r="5" fill="#fff" />
        <circle cx="11" cy="11" r="3.900" fill="#4a86e8" />
      </Svg>
    </IconButton>
    <IconButton label="Запись экрана" width="w-[44px]">
      <Svg w={22} h={22}>
        <circle cx="11" cy="11" r="10.500" fill="#f0a03c" />
        <path
          d="M11 5v3.500M11 13.500V17M5 11h3.500M13.500 11H17M7 7l2.200 2.200M12.800 12.800L15 15M15 7l-2.200 2.200M9.200 12.800L7 15"
          stroke="#fff"
          strokeWidth="2"
          strokeLinecap="round"
        />
      </Svg>
    </IconButton>
    <IconButton label="Проводник" width="w-[48px]">
      <Svg w={20} h={18}>
        <path d="M0 1h7l1.500 2H20v14H0z" fill="#f3c652" />
        <path d="M0 5.500h20V17H0z" fill="#f9db7f" />
        <path d="M3 17v-5.500c0-1 .5-1.500 1.500-1.500h11c1 0 1.500.5 1.500 1.500V17h-4v-3H7v3z" fill="#5596c8" />
      </Svg>
    </IconButton>
    <IconButton label="PowerPoint" width="w-[46px]">
      <Svg w={22} h={22}>
        <path d="M11 3.500h10.500v15H11z" fill="#fff" stroke="#d24726" />
        <path d="M13 12h6.500M13 15h6.500" stroke="#d24726" strokeWidth="1.400" />
        <circle cx="16.500" cy="7.500" r="2.500" fill="#d24726" />
        <path d="M0 2.500L13 0v22L0 19.500z" fill="#d24726" />
        <text x="2.500" y="15.500" fontSize="12" fontWeight="700" fill="#fff">P</text>
      </Svg>
    </IconButton>
    <IconButton label="Excel" width="w-[44px]" className="bg-[#606060]">
      <Svg w={22} h={22}>
        <path d="M12 3.500h9v15h-9z" fill="#fff" stroke="#217346" />
        <path d="M12 6.500h9M12 9.500h9M12 12.500h9M12 15.500h9M17.500 3.500v15" stroke="#217346" />
        <path d="M0 2.500L13 0v22L0 19.500z" fill="#1e7145" />
        <text x="2.500" y="15.500" fontSize="12" fontWeight="700" fill="#fff">X</text>
      </Svg>
    </IconButton>
    <div className="mr-[5px] ml-auto flex flex-col items-center justify-center pt-[2px] leading-[17px]">
      <time>12:57</time>
      <time>22.11.2020</time>
    </div>
  </div>
);

const App = () => {
  const [value, setValue] = useState("000000");

  return (
    <div className="flex h-screen flex-col overflow-hidden font-[Roboto,'Open_Sans',sans-serif]">
      <div className="shrink-0 bg-[#1e6b46]">
        <TitleBar />
        <RibbonTabs />
      </div>
      <div className="shrink-0">
        <Ribbon />
        <FormulaBar value={value} onChange={setValue} />
      </div>
      <Sheet active={value} />
      <div className="shrink-0">
        <SheetTabs />
        <StatusBar />
      </div>
      <Taskbar />
    </div>
  );
};

export default App;
